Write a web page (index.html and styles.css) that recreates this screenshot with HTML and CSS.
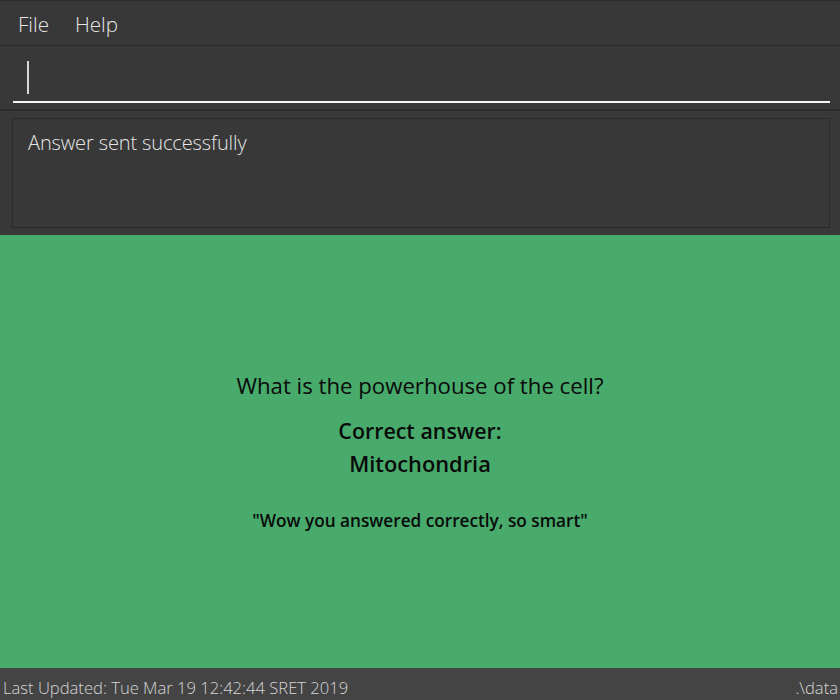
FILE: index.html
```html
<!DOCTYPE html>
<html>
<head>
<meta charset="utf-8">
<link rel="stylesheet" href="styles.css">
</head>
<body>
<div class="app">
  <div class="menubar">
    <span class="menu-item">File</span>
    <span class="menu-item">Help</span>
  </div>
  <div class="command">
    <div class="command-field"><span class="caret"></span></div>
  </div>
  <div class="result">
    <div class="result-box">Answer sent successfully</div>
  </div>
  <div class="card">
    <div class="question">What is the powerhouse of the cell?</div>
    <div class="answer-label">Correct answer:</div>
    <div class="answer">Mitochondria</div>
    <div class="feedback">"Wow you answered correctly, so smart"</div>
  </div>
  <div class="status">
    <span class="status-left">Last Updated: Tue Mar 19 12:42:44 SRET 2019</span>
    <span class="status-right">.\data</span>
  </div>
</div>
</body>
</html>
```
FILE: styles.css
```css
html, body {
  margin: 0;
  padding: 0;
}
body {
  width: 840px;
  height: 700px;
  overflow: hidden;
  font-family: "Open Sans", "Noto Sans", sans-serif;
  background: #383838;
}
.app {
  display: flex;
  flex-direction: column;
  height: 700px;
}
.menubar {
  height: 44px;
  border-top: 1px solid #2d2d2d;
  border-bottom: 1px solid #2b2b2b;
  background: #383838;
  display: flex;
  align-items: center;
  padding-left: 18px;
  gap: 26px;
  box-sizing: content-box;
}
.menu-item {
  color: #e6e6e6;
  font-size: 20.6px;
  font-weight: 300;
  line-height: 1;
  padding-top: 2px;
}
.command {
  height: 63px;
  background: #383838;
  border-bottom: 2px solid #2c2c2c;
  padding: 0 10px 0 13px;
  display: flex;
  flex-direction: column;
}
.command-field {
  height: 55px;
  border-bottom: 2px solid #f4f4f4;
  position: relative;
}
.caret {
  position: absolute;
  left: 14px;
  top: 15px;
  width: 2px;
  height: 33px;
  background: #d8d8d8;
}
.result {
  height: 124px;
  padding: 7px 10px 7px 12px;
  box-sizing: border-box;
  background: #383838;
}
.result-box {
  height: 110px;
  box-sizing: border-box;
  border: 1px solid #2a2a2a;
  padding: 10px 15px;
  color: #e6e6e6;
  font-size: 20px;
  font-weight: 300;
  letter-spacing: -0.12px;
}
.card {
  flex: 1;
  background: #48ab6c;
  display: flex;
  flex-direction: column;
  align-items: center;
  justify-content: center;
  color: #0a0a0a;
}
.question {
  font-size: 22.2px;
  line-height: 30px;
}
.answer-label {
  font-size: 21.4px;
  font-weight: 600;
  margin-top: 15px;
  line-height: 30px;
}
.answer {
  font-size: 21.8px;
  font-weight: 600;
  line-height: 30px;
  margin-top: 3px;
}
.feedback {
  font-size: 17.2px;
  font-weight: 600;
  margin-top: 30px;
  line-height: 24px;
}
.status {
  height: 32px;
  background: #444444;
  display: flex;
  align-items: center;
  justify-content: space-between;
  padding: 0 2px 0 3px;
  color: #d6d6d6;
  font-size: 16.6px;
  font-weight: 300;
}
.status-left, .status-right {
  padding-top: 6px;
}
```
